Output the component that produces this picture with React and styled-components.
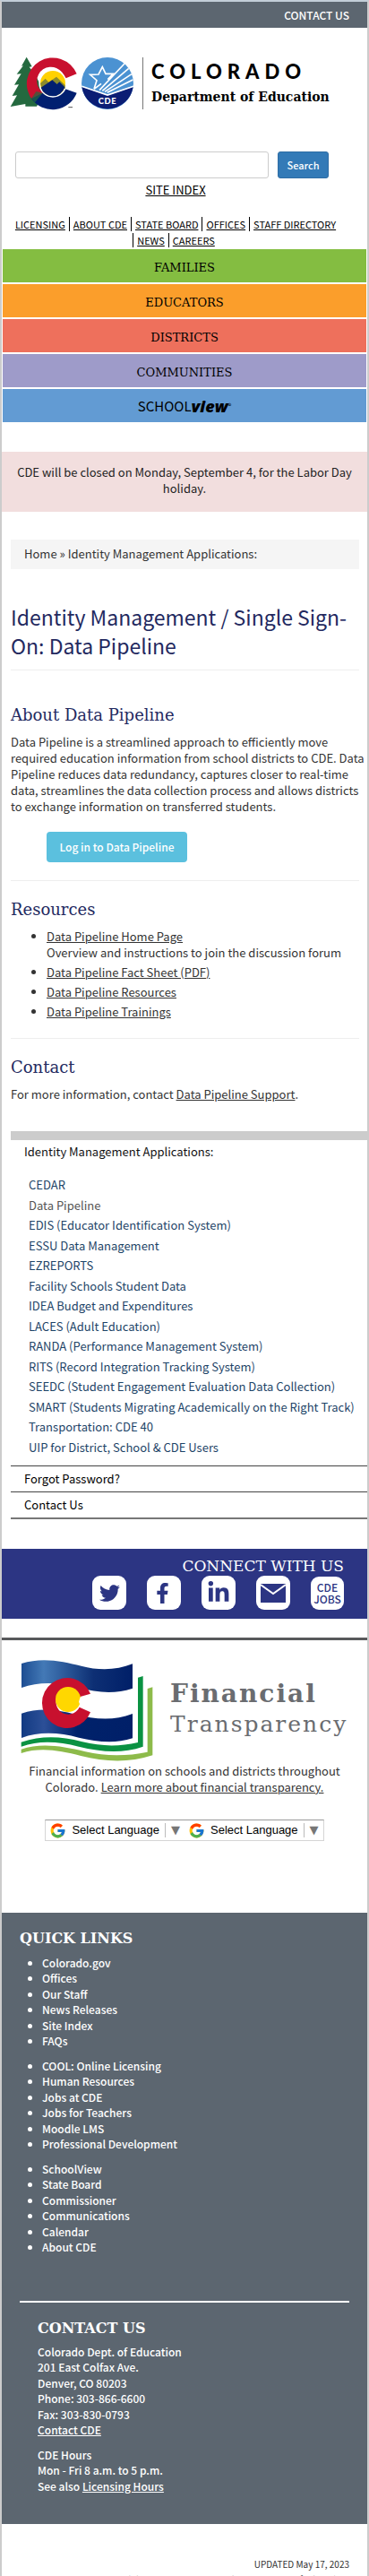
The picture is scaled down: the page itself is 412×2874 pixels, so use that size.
import React from "react";
import styled, { createGlobalStyle } from "styled-components";
import { FaTwitter, FaFacebookF, FaLinkedinIn } from "react-icons/fa";
import { FcGoogle } from "react-icons/fc";

const sans = '"Noto Sans CJK SC", "Open Sans", sans-serif';
const slab = '"DejaVu Serif", "Liberation Serif", serif';
const navy = "#23295f";
const slate = "#5c6670";
const indigo = "#2c3583";

const GlobalStyle = createGlobalStyle`
  *, *::before, *::after { box-sizing: border-box; }
  body { margin: 0; background: #fff; color: #333; font: 400 13px/18px ${sans}; }
  h1, h2, h3, p, ul { margin: 0; padding: 0; font-weight: 400; }
  a { color: inherit; }
`;

const Page = styled.div`
  border: 2px solid #ccc;
  border-top-color: #c3ced8;
  border-bottom: 0;
  background: #fff;
`;

const TopBar = styled.div`
  display: flex;
  align-items: center;
  justify-content: flex-end;
  height: 29px;
  padding-right: 20px;
  background: ${slate};
`;

const TopLink = styled.a`
  color: #fff;
  font-size: 12px;
  font-weight: 500;
  text-decoration: none;
`;

const Brand = styled.a`
  display: flex;
  gap: 9px;
  padding: 32px 0 0 9px;
  color: #000;
  text-decoration: none;
`;

const BrandText = styled.span`
  display: flex;
  flex-direction: column;
  height: 58px;
  margin-top: 1px;
  padding: 3px 0 0 9px;
  border-left: 1px solid #777;
`;

const BrandState = styled.span`
  font: 900 22px/26px Lato, sans-serif;
  letter-spacing: 6px;
`;

const BrandDepartment = styled.span`
  padding-top: 6px;
  font: 700 14px/18px ${slab};
  white-space: nowrap;
`;

const SearchForm = styled.form`
  display: flex;
  gap: 10px;
  padding: 46px 43px 0 15px;
`;

const SearchInput = styled.input`
  flex: 1;
  min-width: 0;
  height: 30px;
  padding: 0 10px;
  border: 1px solid #ccc;
  border-radius: 3px;
  font: inherit;
`;

const SearchButton = styled.button`
  width: 57px;
  height: 30px;
  padding: 0;
  border: 1px solid #2e6da4;
  border-radius: 3px;
  background: #337ab7;
  color: #fff;
  font: 500 11px/18px ${sans};
`;

const SiteIndex = styled.p`
  padding: 4px 20px 0 0;
  color: #000;
  text-align: center;
`;

const UtilityNav = styled.nav`
  display: flex;
  flex-direction: column;
  align-items: center;
  padding: 20px 20px 0 0;
`;

const UtilityRow = styled.div`
  display: flex;
  align-items: center;
  height: 18px;
`;

const UtilityLink = styled.a`
  padding: 0 4px;
  border-left: ${(p) => (p.$first ? "0" : "1px solid #000")};
  color: #000;
  font-size: 11px;
  line-height: 16px;
  white-space: nowrap;
`;

const AudienceNav = styled.nav`
  display: grid;
  gap: 2px;
  padding: 1px 1px 0;
`;

const AudienceLink = styled.a`
  display: flex;
  align-items: center;
  justify-content: center;
  height: 37px;
  padding-top: ${(p) => (p.$logo ? "0" : "4px")};
  background: ${(p) => p.$tone};
  color: #000;
  font: 400 13px/18px ${slab};
  text-decoration: none;
`;

const SchoolWord = styled.span`
  font: 400 15px/20px ${sans};
`;

const ViewWord = styled.span`
  font: italic 800 18px/20px "Open Sans", sans-serif;
`;

const Registered = styled.sup`
  align-self: center;
  font: 400 8px/8px ${sans};
`;

const Alert = styled.p`
  margin-top: 33px;
  padding: 14px 10px 17px;
  background: #f2dede;
  color: #222;
  text-align: center;
`;

const Main = styled.main`
  padding: 31px 9px 0 10px;
`;

const Breadcrumb = styled.nav`
  padding: 7px 15px 8px;
  background: #f5f5f5;
`;

const Crumb = styled.a`
  text-decoration: none;
`;

const Title = styled.h1`
  margin-top: 37px;
  padding-bottom: 11px;
  border-bottom: 1px solid #eee;
  color: ${navy};
  font-size: 23px;
  line-height: 32px;
`;

const Section = styled.section`
  padding: ${(p) => (p.$first ? "38px" : "20px")} 0 20px;
  border-bottom: ${(p) => (p.$last ? "0" : "1px solid #eee")};
`;

const Heading = styled.h2`
  margin-bottom: 9px;
  color: ${navy};
  font: 400 18px/24px ${slab};
`;

const Copy = styled.p`
  white-space: ${(p) => (p.$nowrap ? "nowrap" : "normal")};
`;

const LoginButton = styled.button`
  display: block;
  width: 157px;
  height: 34px;
  margin: 19px 0 0 40px;
  padding: 0;
  border: 0;
  border-radius: 4px;
  background: #5bc0de;
  color: #fff;
  font: 500 12px/18px ${sans};
`;

const ResourceList = styled.ul`
  display: grid;
  gap: 4px;
  padding-left: 40px;
`;

const Sidebar = styled.aside`
  margin: 12px 0 0 10px;
  border-top: 10px solid #ccc;
`;

const SidebarTitle = styled.h3`
  padding: 4px 15px 17px;
  color: #111;
  font-size: 13px;
`;

const AppList = styled.ul`
  display: grid;
  grid-auto-rows: 22px 23px;
  align-items: center;
  padding: 0 0 0 20px;
  margin-bottom: 9px;
  list-style: none;
`;

const AppLink = styled.a`
  color: ${(p) => (p.$current ? "#555" : "#1d4467")};
  text-decoration: none;
  white-space: nowrap;
`;

const SidebarLink = styled.a`
  display: block;
  padding: 5px 15px;
  border-top: 1px solid #444;
  color: #000;
  text-decoration: none;
`;

const SidebarEnd = styled.div`
  border-top: 2px solid #777;
`;

const Connect = styled.section`
  display: flex;
  flex-direction: column;
  align-items: flex-end;
  margin-top: 33px;
  padding: 8px 26px 10px;
  background: ${indigo};
`;

const ConnectTitle = styled.h2`
  color: #fff;
  font: 400 17px/22px ${slab};
`;

const SocialRow = styled.div`
  display: flex;
  align-items: center;
  gap: 23px;
`;

const SocialLink = styled.a`
  display: flex;
  align-items: center;
  justify-content: ${(p) => (p.$start ? "flex-start" : "center")};
  width: 38px;
  height: 38px;
  padding-left: ${(p) => (p.$start ? "6px" : "0")};
  border-radius: 9px;
  background: #fff;
  color: ${indigo};
  text-decoration: none;
`;

const JobsLink = styled(SocialLink)`
  width: 37px;
  height: 37px;
  font: 500 12px/13px ${sans};
  text-align: center;
`;

const Finance = styled.section`
  margin-top: 21px;
  border-top: 3px solid #58595b;
`;

const FinanceBrand = styled.a`
  display: flex;
  gap: 17px;
  padding: 21px 0 0 20px;
  text-decoration: none;
`;

const FinanceWords = styled.span`
  display: flex;
  flex-direction: column;
  padding-top: 22px;
  color: #6a6c70;
  font: 400 25px/34px ${slab};
  letter-spacing: 2px;
`;

const FinanceStrong = styled.strong`
  font-size: 28px;
`;

const FinanceCopy = styled.p`
  padding: 1px 20px 0;
  text-align: center;
`;

const Languages = styled.div`
  display: flex;
  width: fit-content;
  height: 24px;
  margin: 27px auto 80px;
  border: 1px solid #d5d5d5;
  border-top-color: #9b9b9b;
`;

const LanguageButton = styled.button`
  display: flex;
  align-items: center;
  gap: 6px;
  padding: 0 5px 0 4px;
  border: 0;
  background: #fff;
  color: #000;
  font: 400 13px/18px "Liberation Sans", sans-serif;
`;

const Arrow = styled.span`
  padding-left: 6px;
  border-left: 1px solid #bbb;
  color: #767676;
  font: 400 13px/16px "DejaVu Sans", sans-serif;
`;

const Footer = styled.footer`
  padding: 17px 20px 34px;
  background: ${slate};
  color: #fff;
  font-size: 12px;
  font-weight: 500;
`;

const FooterHeading = styled.h2`
  font: 700 16px/24px ${slab};
`;

const FooterList = styled.ul`
  display: grid;
  grid-auto-rows: 17px 18px;
  margin-top: ${(p) => (p.$first ? "6px" : "10px")};
  padding-left: 25px;
  font-weight: 500;
`;

const FooterLink = styled.a`
  text-decoration: none;
`;

const ContactBlock = styled.section`
  margin-top: 51px;
  padding: 17px 20px 0;
  border-top: 2px solid #fff;
`;

const AddressLines = styled.div`
  display: grid;
  grid-auto-rows: 17px 18px;
  margin-top: ${(p) => (p.$first ? "5px" : "10px")};
`;

const Legal = styled.div`
  height: 58px;
  padding: 36px 20px 0;
  overflow: hidden;
  font-size: 10px;
  line-height: 17px;
  text-align: right;
`;

const StateLogo = () => (
  <svg width="139" height="60" viewBox="32 190 417 180" aria-hidden="true">
    <path
      fill="#24693f"
      d="M88 192l18 32-9 1 20 26 30 60-25 46H84v-8l-50 9 22-38-16 2 22-38-15 1 23-37-15 1 22-28-6 1z"
    />
    <path fill="#c8102e" d="M256 248A87 87 0 1 0 108 336L145 312A47 47 0 1 1 216 264z" />
    <path fill="#001f70" d="M256 312A87 87 0 0 1 104 331L142 312A47 47 0 0 0 216 298z" />
    <path fill="#24693f" d="M104 331l16-24 22 5-26 32z" opacity=".7" />
    <circle cx="176" cy="280" r="47" fill="#fff" />
    <circle cx="176" cy="280" r="42" fill="#ffd100" />
    <path fill="#8a8b2c" d="M134 280l17-16 11 12 26-18 29 28v12h-78z" />
    <path fill="#001f70" d="M136 294l18-12 20-13 16 14 8-8 18 18a42 42 0 0 1-80 1z" />
    <path stroke="#555" strokeWidth="3" d="M228 360h14" />
    <circle cx="359" cy="280" r="87" fill="#4b92d2" />
    <path fill="#0b1d74" d="M273 292l86 28 86-28a87 87 0 0 1-172 0z" />
    <path fill="none" stroke="#fff" strokeWidth="5" d="M273 290l86 29 87-29" />
    <path
      fill="none"
      stroke="#fff"
      strokeWidth="5"
      d="M314 299l9-29-22-19 28-1 13-25 11 23 25 0-18 19M314 299l24-18M332 303l84-89M342 305l88-75M350 308l90-59M358 311l86-43"
    />
    <text x="359" y="350" fill="#fff" textAnchor="middle" fontFamily="Lato, sans-serif" fontWeight="900" fontSize="28" letterSpacing="2">
      CDE
    </text>
  </svg>
);

const FlagLogo = () => (
  <svg width="151" height="115" viewBox="36 33 453 345" aria-hidden="true">
    <defs>
      <linearGradient id="flagBlue" x1="0" x2="1">
        <stop offset="0" stopColor="#1d4d92" />
        <stop offset=".2" stopColor="#4379b6" />
        <stop offset=".65" stopColor="#0d2f74" />
        <stop offset="1" stopColor="#001f68" />
      </linearGradient>
      <linearGradient id="flagNavy" x1="0" x2="1">
        <stop offset="0" stopColor="#123a82" />
        <stop offset=".2" stopColor="#2c4f97" />
        <stop offset=".5" stopColor="#00226b" />
        <stop offset="1" stopColor="#001f68" />
      </linearGradient>
    </defs>
    <path fill="url(#flagBlue)" d="M42 48c70-23 140-7 200 8 60 16 120 14 172-7v82c-60 20-120 14-180-2-65-17-130-22-192 0z" />
    <path fill="url(#flagNavy)" d="M42 215c60-20 120-13 180 3 65 17 130 22 192-2v82c-60 20-120 12-180-2-65-17-130-22-192 1z" />
    <path fill="#c8102e" d="M273 149A84 84 0 1 0 273 211L236 194A41 41 0 1 1 236 160z" />
    <circle cx="198" cy="168" r="42" fill="#ffd700" />
    <path fill="#fff" d="M238 163l36-12 6 30-6 22-36-17-4-10z" />
    <path fill="#0a9242" d="M432 95l17-5v236c-70 24-140 18-215 0-70-17-130-22-193 0v-15c70-22 130-20 205-1 65 16 125 16 186 2z" />
    <path fill="#8dbb4a" d="M464 132l17-5v228c-80 26-160 22-240 2-70-18-135-30-200-9v-13c65-22 135-12 215 8 70 16 140 15 208 1z" />
  </svg>
);

const MailIcon = () => (
  <svg width="28" height="21" viewBox="0 0 28 21" aria-hidden="true">
    <path fill={indigo} d="M0 0h28v21H0z" />
    <path fill="none" stroke="#fff" strokeWidth="2" d="M0 1l14 10L28 1" />
  </svg>
);

const utilityRows = [
  ["LICENSING", "ABOUT CDE", "STATE BOARD", "OFFICES", "STAFF DIRECTORY"],
  ["NEWS", "CAREERS"],
];

const audiences = [
  ["FAMILIES", "#84bd41"],
  ["EDUCATORS", "#fb9e2b"],
  ["DISTRICTS", "#ee705c"],
  ["COMMUNITIES", "#9e9bc9"],
];

const applications = [
  "CEDAR",
  "Data Pipeline",
  "EDIS (Educator Identification System)",
  "ESSU Data Management",
  "EZREPORTS",
  "Facility Schools Student Data",
  "IDEA Budget and Expenditures",
  "LACES (Adult Education)",
  "RANDA (Performance Management System)",
  "RITS (Record Integration Tracking System)",
  "SEEDC (Student Engagement Evaluation Data Collection)",
  "SMART (Students Migrating Academically on the Right Track)",
  "Transportation: CDE 40",
  "UIP for District, School & CDE Users",
];

const quickLinks = [
  ["Colorado.gov", "Offices", "Our Staff", "News Releases", "Site Index", "FAQs"],
  ["COOL: Online Licensing", "Human Resources", "Jobs at CDE", "Jobs for Teachers", "Moodle LMS", "Professional Development"],
  ["SchoolView", "State Board", "Commissioner", "Communications", "Calendar", "About CDE"],
];

const Language = () => (
  <LanguageButton type="button">
    <FcGoogle size={19} />
    Select Language
    <Arrow>▼</Arrow>
  </LanguageButton>
);

export default function App() {
  return (
    <Page>
      <GlobalStyle />
      <header>
        <TopBar>
          <TopLink href="#contact">CONTACT US</TopLink>
        </TopBar>
        <Brand href="#home">
          <StateLogo />
          <BrandText>
            <BrandState>COLORADO</BrandState>
            <BrandDepartment>Department of Education</BrandDepartment>
          </BrandText>
        </Brand>
        <SearchForm role="search">
          <SearchInput type="search" aria-label="Search this site" />
          <SearchButton type="submit">Search</SearchButton>
        </SearchForm>
        <SiteIndex>
          <a href="#index">SITE INDEX</a>
        </SiteIndex>
        <UtilityNav>
          {utilityRows.map((row, r) => (
            <UtilityRow key={r}>
              {row.map((label, i) => (
                <UtilityLink key={label} href="#top" $first={r === 0 && i === 0}>
                  {label}
                </UtilityLink>
              ))}
            </UtilityRow>
          ))}
        </UtilityNav>
        <AudienceNav>
          {audiences.map(([label, tone]) => (
            <AudienceLink key={label} href="#audience" $tone={tone}>
              {label}
            </AudienceLink>
          ))}
          <AudienceLink href="#schoolview" $tone="#629bd3" $logo>
            <SchoolWord>SCHOOL</SchoolWord>
            <ViewWord>view</ViewWord>
            <Registered>®</Registered>
          </AudienceLink>
        </AudienceNav>
      </header>

      <Alert>CDE will be closed on Monday, September 4, for the Labor Day holiday.</Alert>

      <Main>
        <Breadcrumb>
          <Crumb href="#home">Home</Crumb> » <Crumb href="#idm">Identity Management Applications:</Crumb>
        </Breadcrumb>
        <Title>Identity Management / Single Sign-On: Data Pipeline</Title>
        <Section $first>
          <Heading>About Data Pipeline</Heading>
          <Copy $nowrap>
            Data Pipeline is a streamlined approach to efficiently move
            <br />
            required education information from school districts to CDE. Data
            <br />
            Pipeline reduces data redundancy, captures closer to real-time
            <br />
            data, streamlines the data collection process and allows districts
            <br />
            to exchange information on transferred students.
          </Copy>
          <LoginButton type="button">Log in to Data Pipeline</LoginButton>
        </Section>
        <Section>
          <Heading>Resources</Heading>
          <ResourceList>
            <li>
              <a href="#homepage">Data Pipeline Home Page</a>
              <Copy $nowrap>Overview and instructions to join the discussion forum</Copy>
            </li>
            <li>
              <a href="#factsheet">Data Pipeline Fact Sheet (PDF)</a>
            </li>
            <li>
              <a href="#resources">Data Pipeline Resources</a>
            </li>
            <li>
              <a href="#trainings">Data Pipeline Trainings</a>
            </li>
          </ResourceList>
        </Section>
        <Section $last>
          <Heading>Contact</Heading>
          <Copy>
            For more information, contact <a href="#support">Data Pipeline Support</a>.
          </Copy>
        </Section>
      </Main>

      <Sidebar>
        <SidebarTitle>Identity Management Applications:</SidebarTitle>
        <AppList>
          {applications.map((name) => (
            <li key={name}>
              <AppLink href="#app" $current={name === "Data Pipeline"}>
                {name}
              </AppLink>
            </li>
          ))}
        </AppList>
        <SidebarLink href="#password">Forgot Password?</SidebarLink>
        <SidebarLink href="#contact">Contact Us</SidebarLink>
        <SidebarEnd />
      </Sidebar>

      <Connect>
        <ConnectTitle>CONNECT WITH US</ConnectTitle>
        <SocialRow>
          <SocialLink href="#twitter" aria-label="Twitter">
            <FaTwitter size={23} />
          </SocialLink>
          <SocialLink href="#facebook" aria-label="Facebook" $start>
            <FaFacebookF size={23} />
          </SocialLink>
          <SocialLink href="#linkedin" aria-label="LinkedIn">
            <FaLinkedinIn size={26} />
          </SocialLink>
          <SocialLink href="#email" aria-label="Email">
            <MailIcon />
          </SocialLink>
          <JobsLink href="#jobs">
            CDE
            <br />
            JOBS
          </JobsLink>
        </SocialRow>
      </Connect>

      <Finance>
        <FinanceBrand href="#finance">
          <FlagLogo />
          <FinanceWords>
            <FinanceStrong>Financial</FinanceStrong>
            Transparency
          </FinanceWords>
        </FinanceBrand>
        <FinanceCopy>
          Financial information on schools and districts throughout Colorado.{" "}
          <a href="#finance">Learn more about financial transparency.</a>
        </FinanceCopy>
        <Languages>
          <Language />
          <Language />
        </Languages>
      </Finance>

      <Footer>
        <FooterHeading>QUICK LINKS</FooterHeading>
        {quickLinks.map((group, i) => (
          <FooterList key={group[0]} $first={i === 0}>
            {group.map((label) => (
              <li key={label}>
                <FooterLink href="#quick">{label}</FooterLink>
              </li>
            ))}
          </FooterList>
        ))}
        <ContactBlock>
          <FooterHeading>CONTACT US</FooterHeading>
          <AddressLines $first>
            <span>Colorado Dept. of Education</span>
            <span>201 East Colfax Ave.</span>
            <span>Denver, CO 80203</span>
            <span>Phone: 303-866-6600</span>
            <span>Fax: 303-830-0793</span>
            <span>
              <a href="#contact">Contact CDE</a>
            </span>
          </AddressLines>
          <AddressLines>
            <span>CDE Hours</span>
            <span>Mon - Fri 8 a.m. to 5 p.m.</span>
            <span>
              See also <a href="#hours">Licensing Hours</a>
            </span>
          </AddressLines>
        </ContactBlock>
      </Footer>
      <Legal>
        UPDATED May 17, 2023
        <br />
        Copyright © 1999-2023 Colorado Department of Education.
      </Legal>
    </Page>
  );
}
